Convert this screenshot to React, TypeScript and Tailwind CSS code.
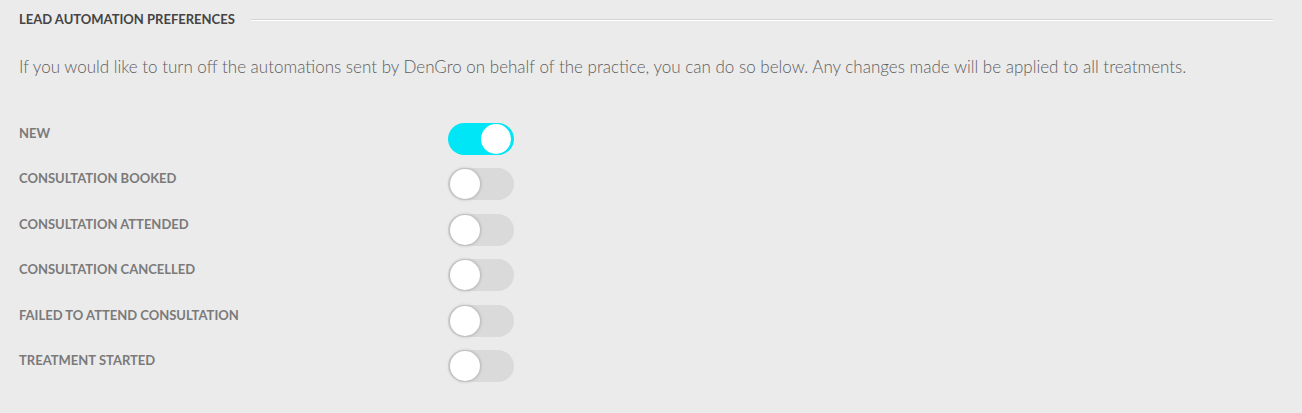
import { useState } from 'react'

const rows = [
  { id: 'new', label: 'NEW', on: true },
  { id: 'booked', label: 'CONSULTATION BOOKED', on: false },
  { id: 'attended', label: 'CONSULTATION ATTENDED', on: false },
  { id: 'cancelled', label: 'CONSULTATION CANCELLED', on: false },
  { id: 'failed', label: 'FAILED TO ATTEND CONSULTATION', on: false },
  { id: 'started', label: 'TREATMENT STARTED', on: false },
]

function Toggle({ on, onClick }: { on: boolean; onClick: () => void }) {
  return (
    <button
      onClick={onClick}
      className={`relative w-[66px] h-[32px] rounded-full transition-colors ${
        on ? 'bg-[#00e6f6]' : 'bg-[#dadada]'
      }`}
    >
      <span
        className={`absolute top-[1px] w-[30px] h-[30px] rounded-full bg-white transition-all ${
          on ? 'left-[33px]' : 'left-[2px] shadow-[0_0_3px_1px_rgba(0,0,0,0.18)]'
        }`}
      />
    </button>
  )
}

export default function App() {
  const [state, setState] = useState(rows.map((r) => r.on))

  return (
    <div className="min-h-[413px] bg-[#ebebeb] px-[19px] pt-[10px] font-['Lato','Liberation_Sans',sans-serif]">
      {/* section header */}
      <div className="flex items-center gap-[16px] pr-[10px]">
        <h2 className="text-[13px] font-bold text-[#444] whitespace-nowrap">
          LEAD AUTOMATION PREFERENCES
        </h2>
        <div className="flex-1 h-[2px] border-t border-[#d4d4d4] border-b border-b-white" />
      </div>

      <p className="mt-[27px] text-[17px] font-light text-[#5e5e5e] leading-[20px]">
        If you would like to turn off the automations sent by DenGro on behalf of the practice, you can do so below. Any changes made will be applied to all treatments.
      </p>

      <div className="mt-[46px] flex flex-col gap-[13.6px]">
        {rows.map((row, i) => (
          <div key={row.id} className="flex items-start">
            <span className="w-[429px] pt-[2px] text-[13px] font-bold text-[#7a7a7a] leading-[16px]">
              {row.label}
            </span>
            <Toggle
              on={state[i]}
              onClick={() => setState((s) => s.map((v, j) => (j === i ? !v : v)))}
            />
          </div>
        ))}
      </div>
    </div>
  )
}
